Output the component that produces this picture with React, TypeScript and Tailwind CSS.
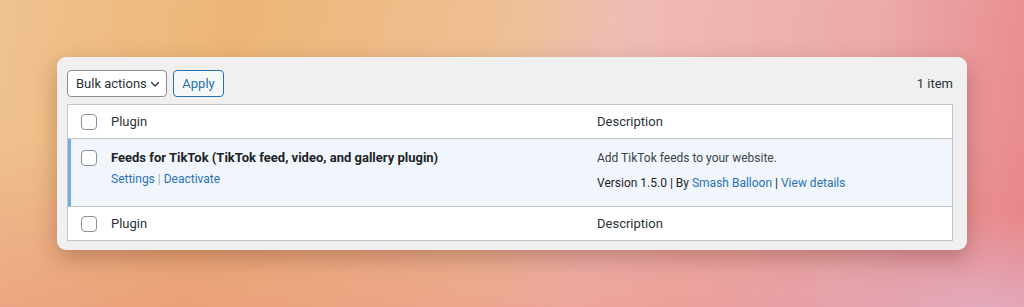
import React from "react";

function Check() {
  return (
    <span className="block h-4 w-4 rounded-[4px] border border-[#8c8f94] bg-white" />
  );
}

function HeadRow({ top }: { top?: boolean }) {
  return (
    <div
      className={
        "flex h-[34px] items-center bg-white text-[13px] text-[#2c3338] " +
        (top ? "border-b border-[#c3c4c7]" : "border-t border-[#c3c4c7]")
      }
    >
      <div className="flex w-[43px] justify-start pl-[13px]">
        <Check />
      </div>
      <div className="w-[486px]">Plugin</div>
      <div className="flex-1">Description</div>
    </div>
  );
}

export default function App() {
  return (
    <div
      className="h-[307px] w-full overflow-hidden bg-[radial-gradient(ellipse_at_96%_100%,rgba(226,172,192,0.95)_0%,rgba(226,172,192,0)_22%),linear-gradient(to_bottom,rgba(232,128,120,0)_45%,rgba(232,128,120,0.4)_100%),linear-gradient(100deg,#efc290_0%,#edb676_22%,#efc096_48%,#f0bdb5_58%,#ecaaa8_82%,#e8858a_100%)] pl-[57px] pt-[57px]"
      style={{ fontFamily: "Roboto, 'Noto Sans', sans-serif" }}
    >
      <div className="h-[193px] w-[910px] rounded-[9px] bg-[#f0f0f1] pl-[10px] pr-[14px] pt-[13px] shadow-[0_8px_22px_rgba(100,45,35,0.35)]">
        <div className="flex h-[27px] items-center">
          <div className="flex h-[27px] w-[100px] items-center justify-between whitespace-nowrap rounded-[4px] border border-[#8c8f94] bg-white pl-[8px] pr-[5px] text-[13px] text-[#2c3338]">
            <span>Bulk actions</span>
            <svg width="12" height="12" viewBox="0 0 12 12" fill="none">
              <path d="M2.5 4.5 6 8l3.5-3.5" stroke="#2c3338" strokeWidth="1.3" strokeLinecap="round" strokeLinejoin="round" />
            </svg>
          </div>
          <div className="ml-[6px] flex h-[27px] w-[51px] items-center justify-center rounded-[4px] border border-[#2271b1] bg-[#f6f7f7] text-[13px] text-[#2271b1]">
            Apply
          </div>
          <div className="ml-auto text-[13px] text-[#2c3338]">1 item</div>
        </div>
        <div className="mt-[7px] border border-[#c3c4c7]">
          <HeadRow top />
          <div className="flex h-[67px] border-l-[3px] border-[#72aee6] bg-[#f0f6fc] pt-[11px] text-[12px]">
            <div className="flex w-[40px] pl-[10px]">
              <Check />
            </div>
            <div className="w-[486px]">
              <div className="text-[13px] font-bold leading-[16px] text-[#1d2327]">
                Feeds for TikTok (TikTok feed, video, and gallery plugin)
              </div>
              <div className="mt-[5px] leading-[16px] text-[#2a72b5]">
                Settings <span className="text-[#a7aaad]">|</span> Deactivate
              </div>
            </div>
            <div className="flex-1 text-[#3c434a]">
              <div className="leading-[16px]">Add TikTok feeds to your website.</div>
              <div className="mt-[9px] leading-[16px] text-[#1d2327]">
                Version 1.5.0 | By <span className="text-[#2a72b5]">Smash Balloon</span> |{" "}
                <span className="text-[#2a72b5]">View details</span>
              </div>
            </div>
          </div>
          <HeadRow />
        </div>
      </div>
    </div>
  );
}
